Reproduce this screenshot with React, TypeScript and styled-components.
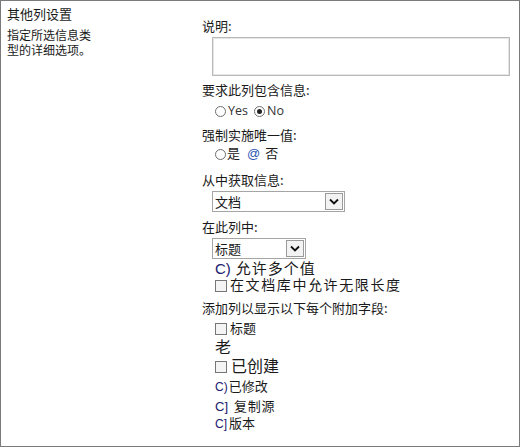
import React from "react";
import styled, { createGlobalStyle } from "styled-components";

const Global = createGlobalStyle`
  html, body { margin: 0; padding: 0; background: #fff; }
  body { font-family: "Noto Sans CJK SC", "Noto Sans", sans-serif; color: #1a1a1a; }
`;

const Frame = styled.div`
  box-sizing: border-box;
  width: 520px;
  height: 447px;
  border: 1px solid #7a7a7a;
  display: grid;
  grid-template-columns: 201px 1fr;
  background: #fff;
`;

const Side = styled.div`
  padding: 5px 0 0 6px;
`;

const SideTitle = styled.div`
  font-size: 13px;
  line-height: 16px;
`;

const SideDesc = styled.div`
  margin-top: 5px;
  width: 90px;
  font-size: 12px;
  line-height: 15px;
`;

const Main = styled.div`
  display: flex;
  flex-direction: column;
  padding-top: 17px;
`;

const Label = styled.div<{ $mt?: number }>`
  margin-top: ${(p) => p.$mt ?? 0}px;
  font-size: 13px;
  line-height: 16px;
  height: 16px;
  white-space: nowrap;
`;

const TextArea = styled.div`
  box-sizing: border-box;
  margin: 3px 0 0 10px;
  width: 298px;
  height: 39px;
  border: 1px solid #b9b9b9;
  box-shadow: inset 0 0 0 1px #e6e6e6;
`;

const Row = styled.div<{ $mt?: number; $h?: number; $size?: number; $spacing?: number }>`
  margin: ${(p) => p.$mt ?? 0}px 0 0 13px;
  height: ${(p) => p.$h ?? 16}px;
  line-height: ${(p) => p.$h ?? 16}px;
  display: flex;
  align-items: center;
  font-family: "Liberation Sans", "Noto Sans CJK SC", sans-serif;
  font-size: ${(p) => p.$size ?? 13}px;
  letter-spacing: ${(p) => p.$spacing ?? 0}px;
  white-space: nowrap;
`;

const Latin = styled.span`
  font-family: "Open Sans", "Noto Sans", sans-serif;
  font-size: 12.5px;
  color: #333;
`;

const Spacer = styled.span<{ $w: number }>`
  display: inline-block;
  width: ${(p) => p.$w}px;
`;

const Radio = styled.span<{ $checked?: boolean; $gap?: number }>`
  box-sizing: border-box;
  display: inline-block;
  width: 11px;
  height: 11px;
  border-radius: 50%;
  border: 1px solid #6e6e6e;
  margin-right: ${(p) => p.$gap ?? 2}px;
  position: relative;
  flex: none;
  &::after {
    content: "";
    display: ${(p) => (p.$checked ? "block" : "none")};
    position: absolute;
    left: 2px;
    top: 2px;
    width: 5px;
    height: 5px;
    border-radius: 50%;
    background: #222;
  }
`;

const Check = styled.span<{ $gap?: number }>`
  box-sizing: border-box;
  display: inline-block;
  width: 12px;
  height: 12px;
  border: 1px solid #777;
  background: #f4f4f4;
  margin-right: ${(p) => p.$gap ?? 3}px;
  flex: none;
`;

const Glyph = styled.span<{ $size?: number; $gap?: number }>`
  font-family: "Liberation Sans", Arial, sans-serif;
  font-size: ${(p) => p.$size ?? 13}px;
  color: #20206e;
  margin-right: ${(p) => p.$gap ?? 2}px;
  letter-spacing: 0;
`;

const At = styled.span`
  font-family: "Liberation Sans", Arial, sans-serif;
  color: #2a55b5;
  margin: 0 5px 0 7px;
`;

const Select = styled.div<{ $w: number; $mt?: number }>`
  box-sizing: border-box;
  margin: ${(p) => p.$mt ?? 3}px 0 0 10px;
  width: ${(p) => p.$w}px;
  height: 21px;
  border: 1px solid #a5a5a5;
  display: flex;
  align-items: stretch;
  background: #fff;
`;

const SelectText = styled.div`
  flex: 1;
  font-size: 13px;
  line-height: 19px;
  padding-left: 2px;
`;

const SelectBtn = styled.div`
  box-sizing: border-box;
  width: 18px;
  border: 1px solid #9a9a9a;
  margin: 1px;
  background: #f3f3f3;
  display: flex;
  align-items: center;
  justify-content: center;
`;

const Chevron = () => (
  <svg width="10" height="7" viewBox="0 0 10 7">
    <path d="M1 1.5 L5 5.5 L9 1.5" fill="none" stroke="#111" strokeWidth="1.8" />
  </svg>
);

export default function App() {
  return (
    <>
      <Global />
      <Frame>
        <Side>
          <SideTitle>其他列设置</SideTitle>
          <SideDesc>指定所选信息类型的详细选项。</SideDesc>
        </Side>
        <Main>
          <Label>说明:</Label>
          <TextArea />
          <Label $mt={6}>要求此列包含信息:</Label>
          <Row $mt={5}>
            <Radio />
            <Latin>Yes</Latin>
            <Spacer $w={6} />
            <Radio $checked />
            <Latin>No</Latin>
          </Row>
          <Label $mt={8}>强制实施唯一值:</Label>
          <Row $mt={3}>
            <Radio $gap={1} />
            是<At>@</At>否
          </Row>
          <Label $mt={10}>从中获取信息:</Label>
          <Select $w={133}>
            <SelectText>文档</SelectText>
            <SelectBtn>
              <Chevron />
            </SelectBtn>
          </Select>
          <Label $mt={7}>在此列中:</Label>
          <Select $w={94}>
            <SelectText>标题</SelectText>
            <SelectBtn>
              <Chevron />
            </SelectBtn>
          </Select>
          <Row $mt={1} $h={17} $size={15} $spacing={1}>
            <Glyph $size={15} $gap={5}>C)</Glyph>允许多个值
          </Row>
          <Row $mt={0} $h={17} $size={14} $spacing={1.6}>
            <Check $gap={3} />在文档库中允许无限长度
          </Row>
          <Label $mt={6}>添加列以显示以下每个附加字段:</Label>
          <Row $mt={4} $h={18}>
            <Check $gap={3} />标题
          </Row>
          <Row $mt={0} $h={19} $size={16}>
            老
          </Row>
          <Row $mt={0} $h={19} $size={16}>
            <Check $gap={4} />已创建
          </Row>
          <Row $mt={2} $h={18}>
            <Glyph $size={12} $gap={1}>C)</Glyph>已修改
          </Row>
          <Row $mt={2} $h={18} $spacing={0.8}>
            <Glyph $size={13} $gap={6}>C]</Glyph>复制源
          </Row>
          <Row $mt={0} $h={16}>
            <Glyph $size={12} $gap={2}>C]</Glyph>版本
          </Row>
        </Main>
      </Frame>
    </>
  );
}
